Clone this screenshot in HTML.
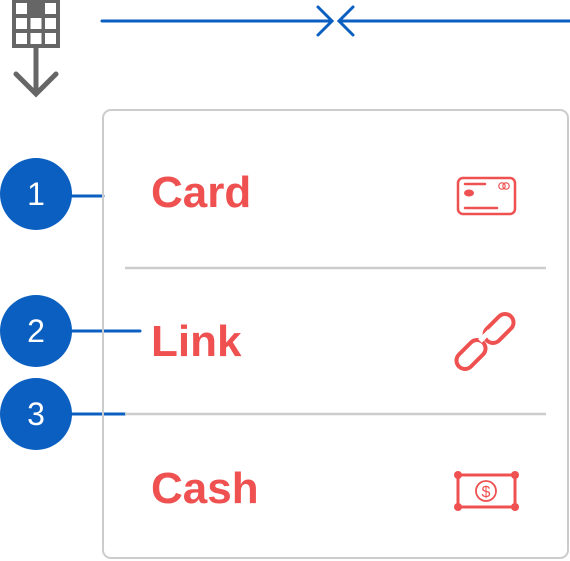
<!DOCTYPE html>
<html><head><style>
body{margin:0;width:570px;height:561px;background:#fff;position:relative;overflow:hidden;font-family:"Liberation Sans",sans-serif}
.t{position:absolute;color:#ef5050;font-weight:bold;font-size:44px;line-height:1}
.c{position:absolute;left:0;width:72px;height:72px;border-radius:50%;background:#0a5fc0;color:#fff;font-size:32px;text-align:center;line-height:72px;font-weight:300}
</style></head><body>
<svg width="570" height="561" style="position:absolute;left:0;top:0">
<rect x="12" y="0" width="48" height="48" fill="#666"/>
<g fill="#fff">
<rect x="16" y="3" width="11" height="11"/><rect x="45" y="3" width="11" height="11"/>
<rect x="16" y="18" width="11" height="11"/><rect x="30.5" y="18" width="11" height="11"/><rect x="45" y="18" width="11" height="11"/>
<rect x="16" y="33" width="11" height="11"/><rect x="30.5" y="33" width="11" height="11"/><rect x="45" y="33" width="11" height="11"/>
</g>
<g stroke="#666" stroke-width="5" fill="none" stroke-linecap="round">
<line x1="36" y1="47" x2="36" y2="92"/><polyline points="16,74 36,94 56,74"/>
</g>
<g stroke="#0a5fc0" stroke-width="3" fill="none" stroke-linecap="round">
<line x1="102" y1="21" x2="331" y2="21"/><polyline points="318,7 332,21 318,35"/>
<line x1="340" y1="21" x2="570" y2="21"/><polyline points="353,7 339,21 353,35"/>
<line x1="70" y1="196" x2="103" y2="196"/>
<line x1="70" y1="331" x2="140" y2="331"/>
<line x1="70" y1="414" x2="125" y2="414"/>
</g>
<rect x="103" y="110" width="465" height="448" rx="8" fill="none" stroke="#ccc" stroke-width="2"/>
<line x1="125" y1="268" x2="546" y2="268" stroke="#ccc" stroke-width="2.5"/>
<line x1="125" y1="414" x2="546" y2="414" stroke="#ccc" stroke-width="2.5"/>
<g stroke="#ef5050" fill="none" stroke-width="2.5" stroke-linecap="round">
<rect x="458" y="178" width="57" height="36" rx="5"/>
<line x1="465" y1="184" x2="485" y2="184"/>
<line x1="465" y1="208" x2="497" y2="208"/>
<circle cx="502" cy="186" r="3.2" stroke-width="1.2"/><circle cx="506" cy="186" r="3.2" stroke-width="1.2"/>
<rect x="482" y="320" width="34" height="17" rx="8.5" transform="rotate(-45 499 328.5)" stroke-width="4"/>
<rect x="454" y="346" width="34" height="17" rx="8.5" transform="rotate(-45 471 354.5)" stroke-width="4"/>
<rect x="458" y="475" width="57" height="32" stroke-width="3"/>
<circle cx="486" cy="491" r="10" stroke-width="1.8"/>
</g>
<line x1="480" y1="341" x2="490" y2="331" stroke="#fff" stroke-width="5"/>
<g fill="#ef5050"><ellipse cx="469" cy="193" rx="5" ry="3.5"/>
<circle cx="458" cy="475" r="4"/><circle cx="515" cy="475" r="4"/><circle cx="458" cy="507" r="4"/><circle cx="515" cy="507" r="4"/></g>
<text x="486" y="497" font-size="16" text-anchor="middle" fill="#ef5050" font-family="Liberation Sans">$</text>
</svg>
<div class="c" style="top:158px">1</div>
<div class="c" style="top:295px">2</div>
<div class="c" style="top:378px">3</div>
<div class="t" style="left:151px;top:171px">Card</div>
<div class="t" style="left:151px;top:320px">Link</div>
<div class="t" style="left:151px;top:467px">Cash</div>
</body></html>
